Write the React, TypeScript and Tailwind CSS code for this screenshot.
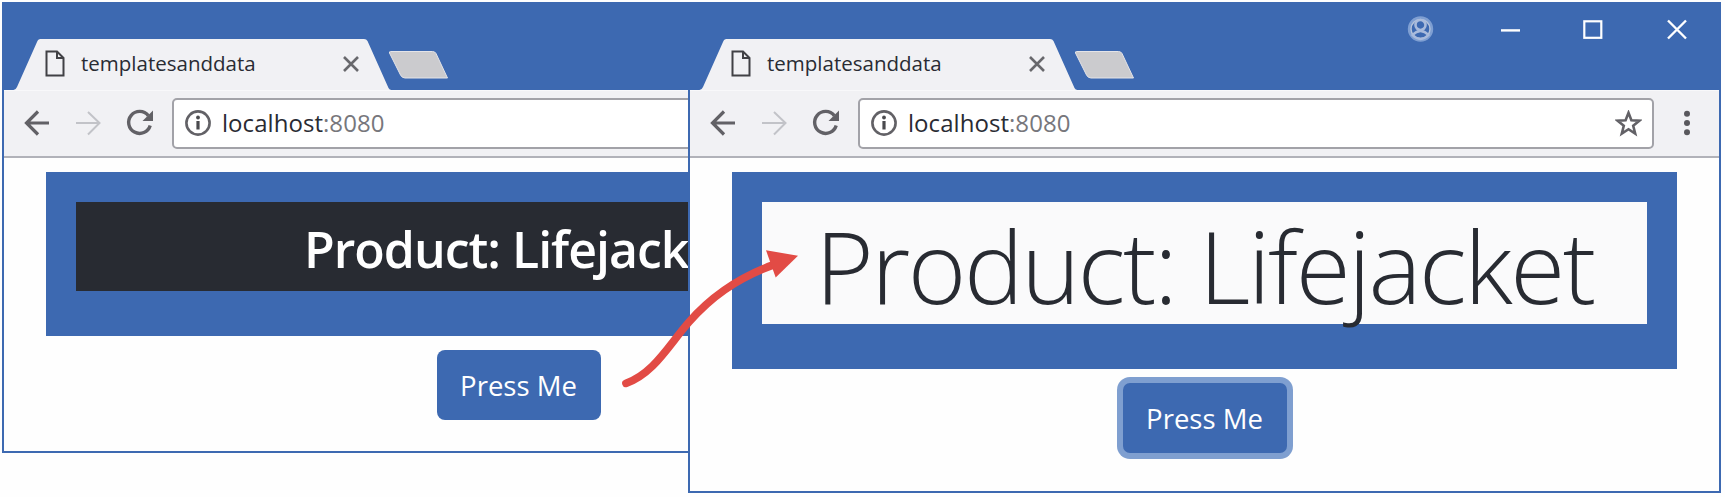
import type { ReactNode } from "react";

function BrowserWindow({ controls, height, children }: { controls?: boolean; height: string; children: ReactNode }) {
  return (
    <div className={`flex w-[1033px] shrink-0 flex-col border-2 border-[#3d69b1] bg-[#fefefe] ${height}`}>
      <div className="flex h-[86px] shrink-0 bg-[#3d69b1]">
        <div className="relative mt-[35px] h-[51px] w-[450px]">
          <svg className="absolute inset-0" width="450" height="51" viewBox="0 0 450 51">
            <path d="M9.500 51 Q12 50.500 13 48 L33 3 Q34 0 36.500 0 H360 Q362.500 0 363.500 2 L384.500 49 Q385.500 51 387.500 51 Z" fill="#f1f1f4" />
            <path d="M386.500 12.500 H428.500 Q431 12.500 432 14.500 L443.500 39 H401 Q398 39 396.500 36 L385.500 14 Q385 12.500 386.500 12.500 Z" fill="#cbcbce" stroke="#e4e4e8" />
          </svg>
          <div className="relative flex h-[49px] items-center pl-[41px]">
            <svg width="20" height="27" viewBox="0 0 20 27" fill="none" stroke="#414145" strokeWidth="2">
              <path d="M1.500 1.500 H12 L18.500 8 V25.500 H1.500 Z M12 1.500 V8 H18.500" />
            </svg>
            <span className="ml-[16px] w-[176px] text-[20.5px] leading-none text-[#292b33]">templatesanddata</span>
            <svg className="ml-[86px] mt-[1px]" width="16" height="16" viewBox="0 0 16 16" stroke="#68686c" strokeWidth="2.6">
              <path d="M1 1 L15 15 M15 1 L1 15" />
            </svg>
          </div>
        </div>
        {controls && (
          <svg className="ml-auto" width="330" height="86" viewBox="0 0 330 86" fill="none">
            <g transform="translate(31.500 25)">
              <circle r="11" stroke="#7f9fd2" strokeWidth="3.400" />
              <circle r="9.500" stroke="#b5c3da" strokeWidth="1.400" />
              <circle cy="-4" r="5" stroke="#a9bbdc" strokeWidth="2.600" />
              <path d="M-8 6 Q-4 2 0 2 T8 6 Q4 10 0 10 T-8 6 Z" stroke="#a9bbdc" strokeWidth="2.400" />
            </g>
            <path d="M112 26.400 H131" stroke="#fff" strokeWidth="2.400" />
            <rect x="195.300" y="17.300" width="17" height="16.500" stroke="#fff" strokeWidth="2.200" />
            <path d="M279 16.500 L297 34.500 M297 16.500 L279 34.500" stroke="#fff" strokeWidth="2.400" />
          </svg>
        )}
      </div>
      <div className="flex h-[68px] shrink-0 items-center border-b-2 border-[#b1b2b9] border-t border-t-[#f8f8fa] bg-[#f1f1f4] pb-[1px] pl-[20px]">
        <svg width="26" height="28" viewBox="0 0 26 28" fill="none" stroke="#626166" strokeWidth="3.200">
          <path d="M25 14 H3 M14 2.500 L2.500 14 L14 25.500" />
        </svg>
        <svg className="ml-[26px]" width="26" height="28" viewBox="0 0 26 28" fill="none" stroke="#c2c3c8" strokeWidth="2">
          <path d="M0 14 H23 M12 3 L23.500 14 L12 25.500" />
        </svg>
        <svg className="ml-[24px]" width="28" height="28" viewBox="0 0 28 28">
          <path d="M24.200 16.500 A11 11 0 1 1 22.300 6.600" fill="none" stroke="#626166" strokeWidth="3.400" />
          <path d="M27 1.500 V12 H16.500 Z" fill="#626166" />
        </svg>
        <div className="ml-[18px] flex h-[51px] w-[796px] items-center rounded-[5px] border-2 border-[#a2a2a8] bg-white pl-[11px] pr-[10px]">
          <svg width="26" height="26" viewBox="0 0 26 26">
            <circle cx="13" cy="13" r="11.600" fill="none" stroke="#626166" strokeWidth="2.600" />
            <path d="M13 11 V19.500" stroke="#4a4a4e" strokeWidth="3.200" />
            <circle cx="13" cy="7.500" r="1.900" fill="#4a4a4e" />
          </svg>
          <span className="ml-[11px] text-[24px] leading-none tracking-[0.05px] text-[#292b33]">
            localhost<span className="text-[#77777c]">:8080</span>
          </span>
          <svg className="ml-auto" width="27" height="27" viewBox="0 0 27 27" fill="none" stroke="#626166" strokeWidth="2.600">
            <path d="M13.500 2.800 L16.400 10.200 L24.300 10.700 L18.200 15.700 L20.200 23.500 L13.500 19.200 L6.800 23.500 L8.800 15.700 L2.700 10.700 L10.600 10.200 Z" />
          </svg>
        </div>
        <svg className="ml-[29px]" width="8" height="28" viewBox="0 0 8 28" fill="#59585d">
          <circle cx="4" cy="4.800" r="3" />
          <circle cx="4" cy="14" r="3" />
          <circle cx="4" cy="23.300" r="3" />
        </svg>
      </div>
      <div className="flex flex-col items-center pt-[14px]">{children}</div>
    </div>
  );
}

export default function App() {
  return (
    <div className="relative h-[497px] w-[1725px] overflow-hidden bg-[#fefefe] pl-[2px] pt-[2px] font-['Open_Sans',sans-serif]">
      <div className="flex items-start">
        <div className="w-[686px] shrink-0 overflow-hidden">
          <BrowserWindow height="h-[451px]">
            <div className="h-[164px] w-[945px] bg-[#3d69b1] px-[30px] pt-[30px]">
              <div className="flex h-[89px] items-center justify-center whitespace-nowrap bg-[#282b32] pl-[2px] pt-[4px] text-[50px] font-semibold leading-none tracking-[-1px] text-white">
                Product: Lifejacket
              </div>
            </div>
            <button className="mt-[14px] h-[70px] w-[164px] rounded-[8px] bg-[#3d69b1] pt-[2px] text-[27.5px] leading-none text-white">Press Me</button>
          </BrowserWindow>
        </div>
        <BrowserWindow height="h-[491px]" controls>
          <div className="h-[197px] w-[945px] bg-[#3d69b1] px-[30px] pt-[30px]">
            <div className="flex h-[122px] items-center justify-center whitespace-nowrap bg-[#fafafb] pt-[4px] text-[100px] font-light leading-none tracking-[-2.4px] text-[#282b32]">
              Product: Lifejacket
            </div>
          </div>
          <button className="mt-[14px] h-[70px] w-[164px] rounded-[7px] bg-[#3d69b1] pt-[2px] text-[27.5px] leading-none text-white shadow-[0_0_0_6px_#7f9fd0]">Press Me</button>
        </BrowserWindow>
      </div>
      <svg className="pointer-events-none absolute left-0 top-0" width="1725" height="497" viewBox="0 0 1725 497">
        <path d="M626 383.300 C654 373 668 346 689 322 S735 279 773 265" fill="none" stroke="#e24b45" strokeWidth="7.800" strokeLinecap="round" />
        <path d="M766 250.300 L798 255.700 L775.700 277.500 Z" fill="#e24b45" />
      </svg>
    </div>
  );
}
